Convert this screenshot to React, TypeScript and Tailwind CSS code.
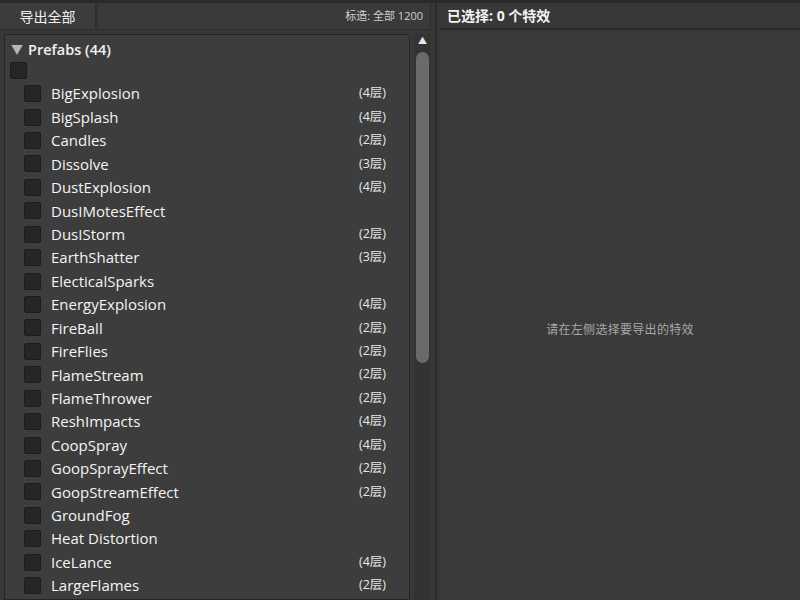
import React from "react";

const ITEMS: [string, string][] = [
  ["BigExplosion", "(4层)"],
  ["BigSplash", "(4层)"],
  ["Candles", "(2层)"],
  ["Dissolve", "(3层)"],
  ["DustExplosion", "(4层)"],
  ["DusIMotesEffect", ""],
  ["DusIStorm", "(2层)"],
  ["EarthShatter", "(3层)"],
  ["ElecticalSparks", ""],
  ["EnergyExplosion", "(4层)"],
  ["FireBall", "(2层)"],
  ["FireFlies", "(2层)"],
  ["FlameStream", "(2层)"],
  ["FlameThrower", "(2层)"],
  ["ReshImpacts", "(4层)"],
  ["CoopSpray", "(4层)"],
  ["GoopSprayEffect", "(2层)"],
  ["GoopStreamEffect", "(2层)"],
  ["GroundFog", ""],
  ["Heat Distortion", ""],
  ["IceLance", "(4层)"],
  ["LargeFlames", "(2层)"],
];

const font = { fontFamily: '"Open Sans", "Noto Sans CJK SC", sans-serif' };

const Box = () => (
  <span className="block w-[17px] h-[17px] shrink-0 rounded-[2px] bg-[#262626] border border-[#1c1c1c]" />
);

export default function App() {
  return (
    <div className="w-[800px] h-[600px] overflow-hidden bg-[#383838] border-t-[3px] border-[#2a2a2a] flex text-[#eeeeee]" style={font}>
      {/* left column */}
      <div className="w-[431px] shrink-0 flex flex-col">
        <div className="h-[27px] flex shrink-0 border-b border-[#2c2c2c]">
          <button className="w-[97px] h-full bg-[#3c3c3c] border-r-2 border-[#2e2e2e] text-[14px] text-[#f0f0f0] flex items-center justify-center pt-[1px]">
            导出全部
          </button>
          <div className="flex-1 h-full ml-[2px] bg-[#3a3a3a] border-r border-[#2c2c2c] flex items-center justify-end pr-[7px] text-[11px] text-[#cfcfcf]">
            标造: 全部 1200
          </div>
        </div>
        <div className="flex-1 flex min-h-0 pt-[4px]">
          <div className="w-[406px] ml-[4px] bg-[#3d3d3d] border border-[#262626] rounded-tr-[2px] flex flex-col pt-[5px] overflow-hidden">
            <div className="h-[20px] flex items-center pl-[6px] gap-[5px]">
              <span className="text-[#b8b8b8] text-[12px] leading-none">▼</span>
              <span className="text-[14.5px] font-semibold text-[#f2f2f2]">Prefabs (44)</span>
            </div>
            <div className="h-[17px] flex items-center pl-[5px] mt-[2px] mb-[3px]">
              <Box />
            </div>
            {ITEMS.map(([name, layers]) => (
              <div key={name} className="h-[23.43px] flex items-center pl-[19px] pr-[23px] shrink-0">
                <Box />
                <span className="ml-[10px] text-[15px] text-[#f4f4f4] flex-1">{name}</span>
                <span className="text-[12.5px] text-[#e8e8e8]">{layers}</span>
              </div>
            ))}
            <div className="h-[23.43px] flex items-center pl-[19px] shrink-0">
              <Box />
            </div>
          </div>
          <div className="w-[17px] ml-[4px] bg-[#333333] flex flex-col items-center">
            <span className="mt-[2px] text-[#e8e8e8] text-[9px] leading-none">▲</span>
            <div className="mt-[7px] w-[13px] h-[311px] rounded-[7px] bg-[#6a6a6a]" />
          </div>
        </div>
      </div>
      {/* separator */}
      <div className="w-[9px] shrink-0 flex justify-center">
        <div className="w-[2px] h-full bg-[#2b2b2b]" />
      </div>
      {/* right column */}
      <div className="flex-1 flex flex-col">
        <div className="h-[27px] shrink-0 bg-[#383838] border-b-2 border-[#2a2a2a] flex items-center pl-[7px] text-[14px] font-bold text-[#f4f4f4]">
          已选择: 0 个特效
        </div>
        <div className="flex-1 bg-[#3a3a3a] flex justify-center pt-[291px]">
          <span className="text-[12px] text-[#a8a8a8] tracking-[0.3px]">请在左侧选择要导出的特效</span>
        </div>
      </div>
    </div>
  );
}
